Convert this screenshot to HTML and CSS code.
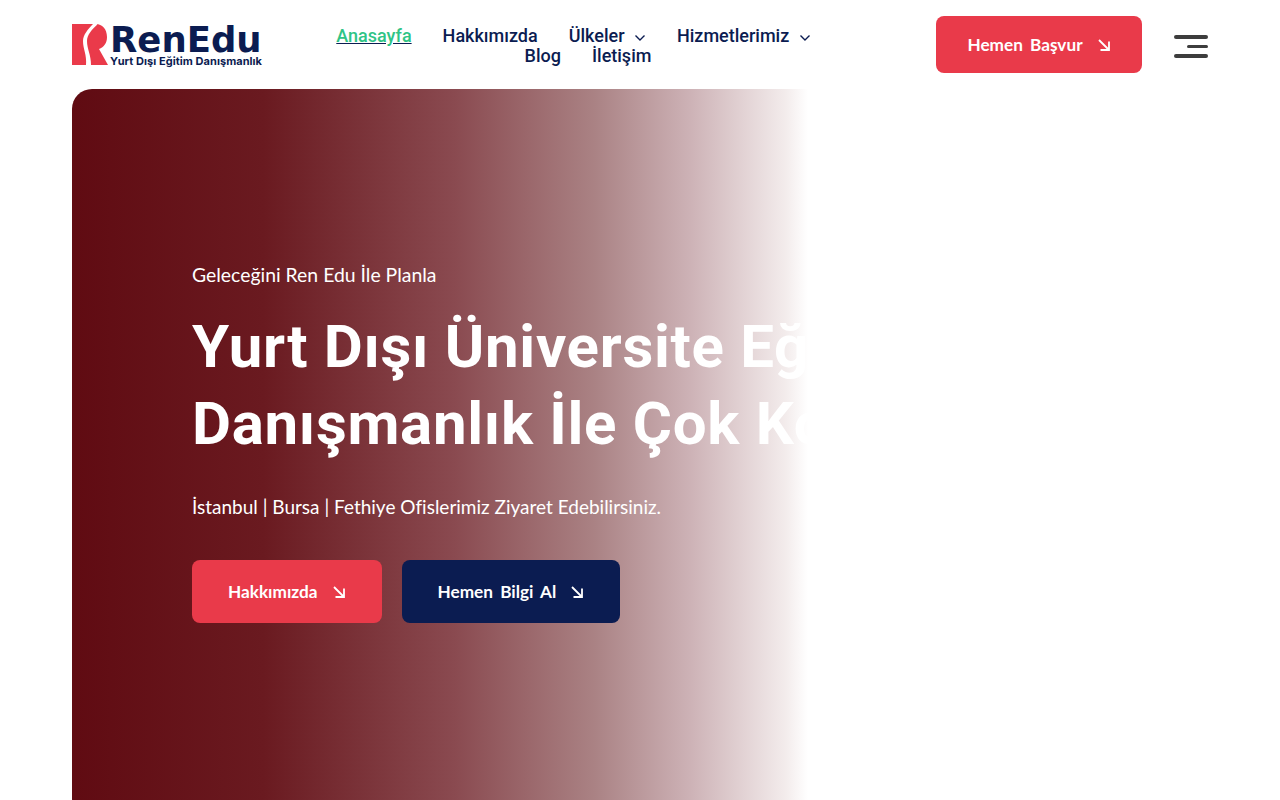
FILE: index.html
```html
<!DOCTYPE html>
<html lang="tr">
<head>
    <meta charset="UTF-8">
    <meta name="viewport" content="width=device-width, initial-scale=1.0">
    <title>RenEdu</title>
    <link rel="stylesheet" href="styles.css">
</head>
<body>
    <header class="site-header">
        <a class="logo" href="#">
            <svg class="logo-mark" viewBox="0 0 36 42" aria-hidden="true">
                <path d="M0 0H21C16 5 11 11 11 17C11 25 15 31 14 41H0Z" fill="#ea3a4a"/>
                <path d="M26 0C20 5 15 11 15 17C15 25 19 31 19 41H36L27 25C32 23 35 19 35 13C35 5 30 0 24 0Z" fill="#ea3a4a"/>
            </svg>
            <span class="logo-text">
                <span class="logo-name">RenEdu</span>
                <span class="logo-sub">Yurt Dışı Eğitim Danışmanlık</span>
            </span>
        </a>
        <nav class="main-nav">
            <a class="nav-link active" href="#">Anasayfa</a>
            <a class="nav-link" href="#">Hakkımızda</a>
            <a class="nav-link" href="#">Ülkeler
                <svg class="chevron" viewBox="0 0 12 8"><path d="M1.5 1.5 6 6l4.5-4.5"/></svg>
            </a>
            <a class="nav-link nav-link-last" href="#">Hizmetlerimiz
                <svg class="chevron" viewBox="0 0 12 8"><path d="M1.5 1.5 6 6l4.5-4.5"/></svg>
            </a>
            <a class="nav-link" href="#">Blog</a>
            <a class="nav-link" href="#">İletişim</a>
        </nav>
        <a class="btn btn-red header-btn" href="#">Hemen Başvur
            <svg class="arrow" viewBox="0 0 14 14"><path d="M2 2 12 12M12 3.5V12H3.5"/></svg>
        </a>
        <button class="menu-toggle" type="button" aria-label="Menu">
            <span class="bar"></span>
            <span class="bar bar-short"></span>
            <span class="bar"></span>
        </button>
    </header>

    <section class="hero">
        <p class="hero-top">Geleceğini Ren Edu İle Planla</p>
        <h1 class="hero-title">Yurt Dışı Üniversite Eğitimi İçin<br>Danışmanlık İle Çok Kolay</h1>
        <p class="hero-sub">İstanbul | Bursa | Fethiye Ofislerimiz Ziyaret Edebilirsiniz.</p>
        <div class="hero-actions">
            <a class="btn btn-red" href="#">Hakkımızda
                <svg class="arrow" viewBox="0 0 14 14"><path d="M2 2 12 12M12 3.5V12H3.5"/></svg>
            </a>
            <a class="btn btn-navy" href="#">Hemen Bilgi Al
                <svg class="arrow" viewBox="0 0 14 14"><path d="M2 2 12 12M12 3.5V12H3.5"/></svg>
            </a>
        </div>
    </section>
</body>
</html>
```

FILE: styles.css
```css
* {
    box-sizing: border-box;
}
html, body {
    height: 100%;
}
body {
    margin: 0;
    background: #fff;
    font-family: "Roboto", sans-serif;
    overflow: hidden;
}
a {
    text-decoration: none;
}
.site-header {
    display: flex;
    align-items: center;
    height: 89px;
    padding: 0 72px;
}
.logo {
    display: flex;
    align-items: center;
    gap: 2px;
    width: 191px;
    flex-shrink: 0;
    margin-top: 1px;
}
.logo-mark {
    width: 36px;
    height: 42px;
}
.logo-text {
    display: flex;
    flex-direction: column;
    color: #0b1c51;
}
.logo-name {
    font-family: "DejaVu Sans", sans-serif;
    font-weight: 700;
    font-size: 35.5px;
    line-height: 31px;
}
.logo-sub {
    font-family: "Inter", sans-serif;
    font-weight: 700;
    font-size: 11px;
    line-height: 12px;
    letter-spacing: 0.05px;
    white-space: nowrap;
}
.main-nav {
    width: 520px;
    margin-left: 65px;
    margin-top: 2px;
    display: flex;
    flex-wrap: wrap;
    justify-content: center;
    column-gap: 31px;
    line-height: 19.5px;
}
.nav-link {
    color: #0b1c51;
    font-size: 18px;
    font-weight: 500;
    white-space: nowrap;
}
.nav-link-last {
    margin-right: 29px;
}
.nav-link.active {
    color: #2fc486;
    text-decoration: underline;
    text-decoration-color: #0b1c51;
}
.chevron {
    width: 12px;
    height: 8px;
    margin-left: 5px;
    fill: none;
    stroke: #0b1c51;
    stroke-width: 1.4;
}
.btn {
    display: inline-flex;
    align-items: center;
    justify-content: center;
    gap: 14px;
    color: #fff;
    font-family: "Lato", sans-serif;
    font-size: 17.2px;
    font-weight: 700;
    word-spacing: 3px;
    border-radius: 8px;
    white-space: nowrap;
}
.btn-red {
    background: #e93a4a;
}
.btn-navy {
    background: #0b1c51;
}
.arrow {
    width: 14px;
    height: 14px;
    fill: none;
    stroke: #fff;
    stroke-width: 1.8;
}
.header-btn {
    width: 206px;
    height: 57px;
    margin-left: auto;
}
.menu-toggle {
    display: flex;
    flex-direction: column;
    align-items: flex-end;
    gap: 6px;
    width: 34px;
    margin-top: 4px;
    margin-left: 32px;
    padding: 0;
    background: none;
    border: 0;
}
.bar {
    display: block;
    width: 34px;
    height: 3.5px;
    border-radius: 2px;
    background: #3d3d3d;
}
.bar-short {
    width: 21px;
}
.hero {
    height: 729px;
    margin-left: 72px;
    padding: 174px 0 0 120px;
    border-radius: 20px 0 0 20px;
    background: linear-gradient(90deg, #600b12 0%, #6a1a20 26%, #8a4a50 52%, #aa8284 71%, #cdb2b6 84%, #f3ecec 97%, #fff 100%);
    background-size: 736px 100%;
    background-repeat: no-repeat;
    color: #fff;
    white-space: nowrap;
    overflow: hidden;
}
.hero-top {
    margin: 0;
    font-family: "Lato", sans-serif;
    font-size: 19.4px;
    line-height: 24px;
}
.hero-title {
    margin: 21px 0 0;
    font-size: 60px;
    font-weight: 700;
    letter-spacing: 0.7px;
    line-height: 77px;
}
.hero-sub {
    margin: 33px 0 0;
    font-family: "Lato", sans-serif;
    font-size: 19px;
    line-height: 24px;
}
.hero-actions {
    display: flex;
    gap: 20px;
    margin-top: 41px;
}
.hero-actions .btn {
    height: 63px;
    padding: 0 36px;
}
```
